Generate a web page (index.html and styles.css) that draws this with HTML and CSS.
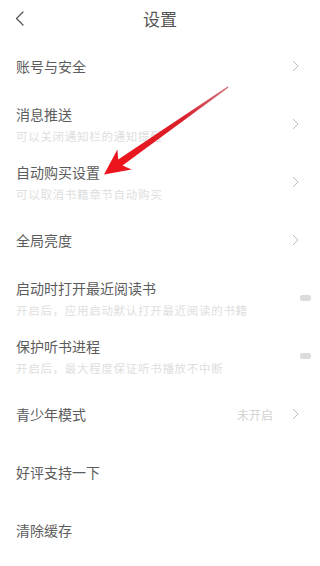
FILE: index.html
```html
<!DOCTYPE html>
<html lang="zh-CN">
<head>
<meta charset="utf-8">
<title>设置</title>
<link rel="stylesheet" href="styles.css">
</head>
<body>
<div class="page">
  <header class="header">
    <div class="back">
      <svg width="9" height="15" viewBox="0 0 9 15"><path d="M8 1 L1.5 7.5 L8 14" fill="none" stroke="#555" stroke-width="1.3" stroke-linecap="round" stroke-linejoin="round"/></svg>
    </div>
    <div class="title">设置</div>
    <div></div>
  </header>

  <div class="row">
    <div class="text"><div class="name">账号与安全</div></div>
    <svg class="chev" width="7" height="12" viewBox="0 0 7 12"><path d="M1 1 L6 6 L1 11" fill="none" stroke="#bdbdbd" stroke-width="1"/></svg>
  </div>
  <div class="row">
    <div class="text"><div class="name">消息推送</div><div class="sub">可以关闭通知栏的通知提醒</div></div>
    <svg class="chev" width="7" height="12" viewBox="0 0 7 12"><path d="M1 1 L6 6 L1 11" fill="none" stroke="#bdbdbd" stroke-width="1"/></svg>
  </div>
  <div class="row">
    <div class="text"><div class="name">自动购买设置</div><div class="sub">可以取消书籍章节自动购买</div></div>
    <svg class="chev" width="7" height="12" viewBox="0 0 7 12"><path d="M1 1 L6 6 L1 11" fill="none" stroke="#bdbdbd" stroke-width="1"/></svg>
  </div>
  <div class="row">
    <div class="text"><div class="name">全局亮度</div></div>
    <svg class="chev" width="7" height="12" viewBox="0 0 7 12"><path d="M1 1 L6 6 L1 11" fill="none" stroke="#bdbdbd" stroke-width="1"/></svg>
  </div>
  <div class="row">
    <div class="text"><div class="name">启动时打开最近阅读书</div><div class="sub">开启后，应用启动默认打开最近阅读的书籍</div></div>
    <div class="toggle"></div>
  </div>
  <div class="row">
    <div class="text"><div class="name">保护听书进程</div><div class="sub">开启后，最大程度保证听书播放不中断</div></div>
    <div class="toggle"></div>
  </div>
  <div class="row">
    <div class="text"><div class="name">青少年模式</div></div>
    <span class="value">未开启</span>
    <svg class="chev" width="7" height="12" viewBox="0 0 7 12"><path d="M1 1 L6 6 L1 11" fill="none" stroke="#bdbdbd" stroke-width="1"/></svg>
  </div>
  <div class="row">
    <div class="text"><div class="name">好评支持一下</div></div>
  </div>
  <div class="row">
    <div class="text"><div class="name">清除缓存</div></div>
  </div>

  <svg class="arrow" width="320" height="566" viewBox="0 0 320 566">
    <defs>
      <linearGradient id="ag" x1="228" y1="87" x2="104" y2="174" gradientUnits="userSpaceOnUse">
        <stop offset="0" stop-color="#c0394a" stop-opacity="0.7"/>
        <stop offset="0.35" stop-color="#d9202a"/>
        <stop offset="1" stop-color="#f0121a"/>
      </linearGradient>
    </defs>
    <polygon points="228.6,87.4 122.5,165.6 131.6,169.6 104,174.5 117.4,149.6 118.2,159.4 227.6,86.4" fill="url(#ag)"/>
  </svg>
</div>
</body>
</html>
```
FILE: styles.css
```css
html, body {
  margin: 0;
  padding: 0;
  background: #fff;
}
body {
  font-family: "Noto Sans CJK SC", "Noto Sans", sans-serif;
  color: #5a5a5a;
}
.page {
  position: relative;
  width: 320px;
  height: 566px;
  overflow: hidden;
}
.header {
  height: 37px;
  display: grid;
  grid-template-columns: 48px 1fr 48px;
  align-items: center;
}
.back {
  padding-left: 15px;
  display: flex;
  align-items: center;
}
.title {
  text-align: center;
  font-size: 17px;
  color: #555;
  line-height: 22px;
}
.row {
  height: 58px;
  display: flex;
  align-items: center;
  padding-left: 16px;
}
.text {
  flex: 1;
  display: flex;
  flex-direction: column;
}
.name {
  font-size: 14px;
  line-height: 20px;
  color: #5c5c5c;
}
.sub {
  font-size: 11.5px;
  line-height: 16px;
  margin-top: 4px;
  color: #dedede;
  letter-spacing: 0.7px;
  white-space: nowrap;
}
.chev {
  margin-right: 21px;
  flex: none;
}
.value {
  font-size: 12px;
  color: #d2d2d2;
  margin-right: 19px;
}
.toggle {
  width: 11px;
  height: 6px;
  background: #dcdcdc;
  border-radius: 2px;
  margin-right: 9px;
  flex: none;
}
.arrow {
  position: absolute;
  left: 0;
  top: 0;
  pointer-events: none;
}
```
